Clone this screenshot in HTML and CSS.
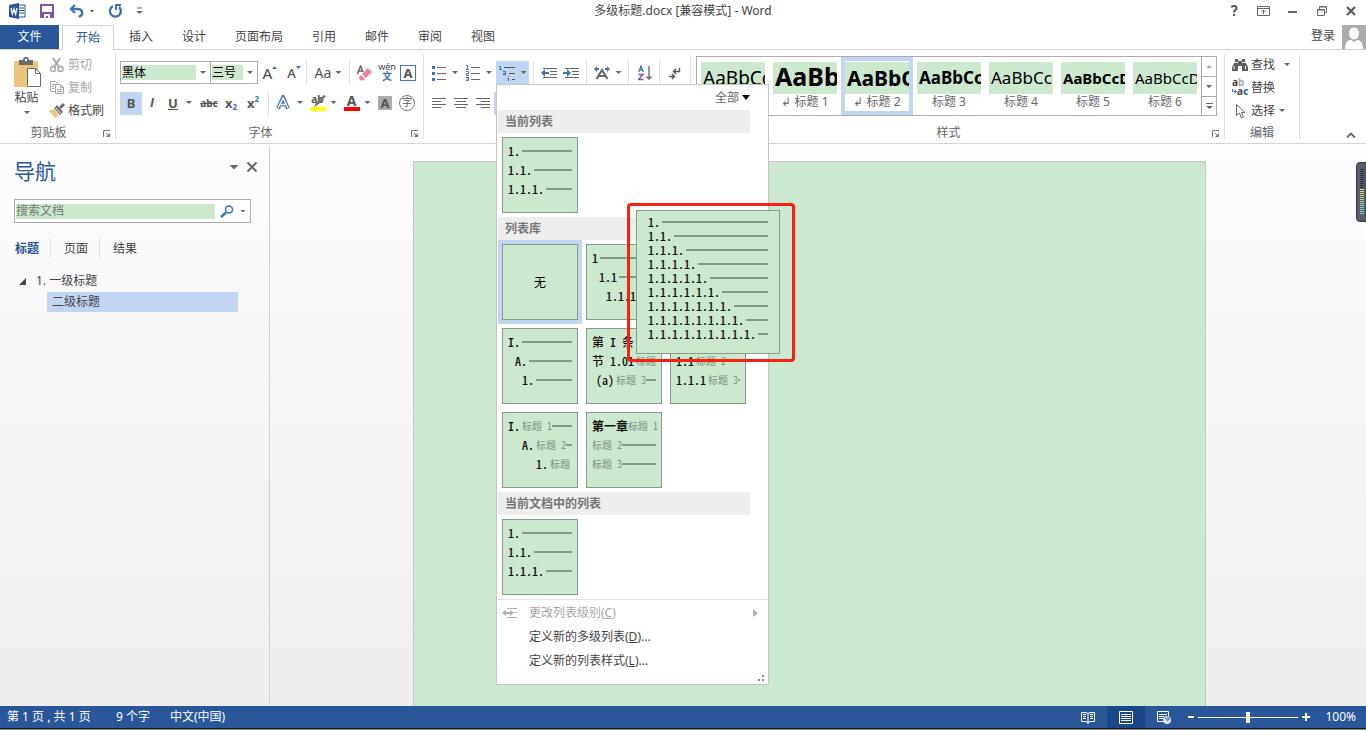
FILE: index.html
```html
<!DOCTYPE html>
<html lang="zh-CN">
<head>
<meta charset="utf-8">
<meta name="viewport" content="width=device-width, initial-scale=1">
<title>多级标题.docx [兼容模式] - Word</title>
<link rel="stylesheet" href="styles.css">
</head>
<body>
<header class="titlebar">
  <div class="quick">
    <svg width="18" height="16" viewBox="0 0 18 16"><path d="M9 2h7v12H9z" fill="#fff" stroke="#2a579a"/><path d="M10 5h5M10 7.500h5M10 10h5" stroke="#2a579a"/><path d="M0 2l10-2v16L0 14z" fill="#2a579a"/><path d="M2 5l1.400 6L5 6l1.600 5L8 5" fill="none" stroke="#fff" stroke-width="1.300"/></svg>
    <button aria-label="保存"><svg width="14" height="14" viewBox="0 0 14 14"><path d="M1 1h12v12H1z" fill="#fff" stroke="#8452ad" stroke-width="2"/><path d="M1 8h12v5H1z" fill="#8452ad"/><path d="M4 10h6v4H8v-2H6v2H4z" fill="#fff"/></svg></button>
    <button class="undo" aria-label="撤消"><svg width="15" height="14" viewBox="0 0 15 14"><path d="M2 5h6.500c6 0 6 7 1 7.500" fill="none" stroke="#3c76b5" stroke-width="2.400"/><path d="M6 1L2 5l4 4" fill="none" stroke="#3c76b5" stroke-width="2.400"/></svg><i class="arr"></i></button>
    <button aria-label="重复"><svg width="14" height="14" viewBox="0 0 14 14"><path d="M5 2.200A5.500 5.500 0 1 0 11 3" fill="none" stroke="#3c76b5" stroke-width="2.400"/><path d="M8 6V1h5" fill="none" stroke="#3c76b5" stroke-width="2"/></svg></button>
    <button class="more" aria-label="自定义"><svg width="7" height="8" viewBox="0 0 7 8"><path d="M1 1h5" stroke="#666"/><path d="M0 4h7L3.500 7z" fill="#666"/></svg></button>
  </div>
  <h1 class="doc-title">多级标题.docx [兼容模式] - Word</h1>
  <div class="window">
    <button aria-label="帮助"><svg width="16" height="14" viewBox="0 0 16 14"><path d="M5.500 3.500C6 1.500 10.500 1.300 10.500 4.200 10.500 6 8 6 8 8.500" fill="none" stroke="#555" stroke-width="2"/><path d="M7 10h2v2H7z" fill="#555"/></svg></button>
    <button aria-label="功能区显示选项"><svg width="14" height="14" viewBox="0 0 14 14"><path d="M.5 2.500h12v9H.5zM.5 4.500h12M6.500 10V6M4.500 8l2-2 2 2" fill="none" stroke="#666"/></svg></button>
    <button aria-label="最小化"><svg width="14" height="14" viewBox="0 0 14 14"><path d="M2 8h9" stroke="#666" stroke-width="2"/></svg></button>
    <button aria-label="还原"><svg width="14" height="14" viewBox="0 0 14 14"><path d="M4.500 5V2.500h7v6H9M2.500 5.500h7v6h-7z" fill="none" stroke="#666"/><path d="M4 3h8M2 6h8" stroke="#666"/></svg></button>
    <button aria-label="关闭"><svg width="14" height="14" viewBox="0 0 14 14"><path d="M3 3l8 8M11 3l-8 8" stroke="#555" stroke-width="2"/></svg></button>
  </div>
</header>

<nav class="tabs">
  <button class="file">文件</button>
  <button class="tab active">开始</button><button class="tab">插入</button><button class="tab">设计</button><button class="tab">页面布局</button><button class="tab">引用</button><button class="tab">邮件</button><button class="tab">审阅</button><button class="tab">视图</button>
  <a class="login" href="#">登录</a>
  <svg width="24" height="24" viewBox="0 0 24 24"><path d="M0 0h24v24H0z" fill="#ababab"/><path d="M12 2.500c7 0 6 12 0 12s-7-12 0-12z" fill="#fff"/><path d="M3 24c0-7 3-9 6-9l3 2 3-2c3 0 6 2 6 9z" fill="#fff"/></svg>
</nav>

<section class="ribbon">
  <div class="group clipboard">
    <div class="body">
      <button class="paste"><svg width="30" height="32" viewBox="0 0 30 32"><path d="M1 4h24v26H1z" fill="#ecc57d"/><path d="M6 3h4c0-4 6-4 6 0h4v5H6z" fill="#6b6b6b"/><path d="M12 2h2v2h-2z" fill="#fff"/><path d="M14.500 11.500h8l5 5v13h-13z" fill="#fff" stroke="#6b6b6b"/><path d="M22.500 11.500v5h5" fill="none" stroke="#6b6b6b"/></svg><span>粘贴</span><i class="arr"></i></button>
      <div class="stack">
        <button class="cmd off"><svg width="16" height="16" viewBox="0 0 16 16"><path d="M4 1l6 9M11 1L5 10" stroke="#a6a6a6" stroke-width="2"/><circle cx="4" cy="12" r="2.500" fill="none" stroke="#a6a6a6" stroke-width="1.400"/><circle cx="11.500" cy="12" r="2.500" fill="none" stroke="#a6a6a6" stroke-width="1.400"/></svg>剪切</button>
        <button class="cmd off"><svg width="16" height="16" viewBox="0 0 16 16"><path d="M1.500 1.500h5l2 2v8h-7zM3 4.500h3M3 6.500h2M3 8.500h2" fill="#fff" stroke="#a6a6a6"/><path d="M6.500 4.500h5l3 3v6h-8zM11.500 4.500v3h3M8 9.500h5M8 11.500h5" fill="#fff" stroke="#a6a6a6"/></svg>复制</button>
        <button class="cmd"><svg width="16" height="16" viewBox="0 0 16 16"><path d="M0 8l5-2 5 6-4 3z" fill="#ecc57d"/><path d="M5 5l3-3 6 7-3 3z" fill="#6b6b6b"/><path d="M10 4l4-4 2 2-4 4z" fill="#6b6b6b"/><path d="M6.500 4.500l5.500 6" stroke="#fff"/></svg>格式刷</button>
      </div>
    </div>
    <div class="caption"><span>剪贴板</span><svg class="launch" width="8" height="8" viewBox="0 0 8 8"><path d="M.5 7V.5H7M3 3l3 3" fill="none" stroke="#777"/><path d="M7 3v4H3z" fill="#777"/></svg></div>
  </div>

  <div class="group font">
    <div class="body rows">
      <div class="row f1">
        <label class="combo"><select aria-label="字体"><option>黑体</option></select><i class="arr"></i></label>
        <label class="combo second"><select aria-label="字号"><option>三号</option></select><i class="arr"></i></label>
        <button class="glyph">A<svg width="5" height="16" viewBox="0 0 5 16"><path d="M0 4h5L2.500 1z" fill="#3c76b5"/></svg></button>
        <button class="glyph small">A<svg width="5" height="16" viewBox="0 0 5 16"><path d="M0 1h5L2.500 4z" fill="#3c76b5"/></svg></button>
        <i class="sep"></i>
        <button class="glyph aa">Aa<i class="arr"></i></button>
        <i class="sep"></i>
        <button class="tool" aria-label="清除格式"><svg width="16" height="16" viewBox="0 0 16 16"><path d="M1.500 9L4.500 1l2.500 6M2.500 6h4" fill="none" stroke="#666" stroke-width="1.500"/><path d="M6 9l6-6 4 4-6 6z" fill="#e8819a"/><path d="M5 10l4 4-2 1.500H5L2.500 13z" fill="#e8819a"/></svg></button>
        <button class="pinyin"><span>wén</span><b>文</b></button>
        <button class="tool"><span class="boxed">A</span></button>
      </div>
      <div class="row f2">
        <button class="glyph on bold">B</button>
        <button class="glyph ital">I</button>
        <button class="glyph bold"><u>U</u><i class="arr"></i></button>
        <button class="glyph strike">abc</button>
        <button class="glyph scr">x<sub>2</sub></button>
        <button class="glyph scr">x<sup>2</sup></button>
        <i class="sep"></i>
        <button class="glyph" aria-label="文本效果"><svg width="16" height="16" viewBox="0 0 16 16"><path d="M3 13.500L8 2.500l5 11M5 9.500h6" fill="none" stroke="#cfe0f2" stroke-width="5"/><path d="M3 13.500L8 2.500l5 11M5 9.500h6" fill="none" stroke="#3c76b5" stroke-width="3.600"/><path d="M3 13L8 3l5 10M5 9.500h6" fill="none" stroke="#fff" stroke-width="1.300"/></svg><i class="arr"></i></button>
        <button class="glyph"><span class="mark"><small>ab</small><svg width="16" height="12" viewBox="0 0 16 12"><path d="M16 1l-7 8-5 3 2-5 8-7z" fill="#777"/></svg></span><i class="arr"></i></button>
        <button class="glyph"><span class="redbar">A</span><i class="arr"></i></button>
        <button class="tool"><span class="shade">A</span></button>
        <button class="tool"><span class="ring">字</span></button>
      </div>
    </div>
    <div class="caption"><span>字体</span><svg class="launch" width="8" height="8" viewBox="0 0 8 8"><path d="M.5 7V.5H7M3 3l3 3" fill="none" stroke="#777"/><path d="M7 3v4H3z" fill="#777"/></svg></div>
  </div>

  <div class="group para">
    <div class="body rows">
      <div class="row p1">
        <button class="glyph" aria-label="项目符号"><svg width="14" height="16" viewBox="0 0 14 16"><path d="M5 2.500h9M5 8.500h9M5 14.500h9" stroke="#666"/><path d="M0 1h3v3H0zM0 7h3v3H0zM0 13h3v3H0z" fill="#3c76b5"/></svg><i class="arr"></i></button>
        <button class="glyph" aria-label="编号"><svg width="14" height="16" viewBox="0 0 14 16"><path d="M5 2.500h9M5 8.500h9M5 14.500h9" stroke="#666"/><path d="M0 .5h1.500V4M0 4.500h3M0 6.500h2.500v2H.5v2H3M0 12.500h2.500v3H0M.5 14h2" fill="none" stroke="#3c76b5"/></svg><i class="arr"></i></button>
        <div class="multi">
          <button class="glyph on" aria-label="多级列表" aria-expanded="true"><svg width="16" height="16" viewBox="0 0 16 16"><path d="M5 2.500h11M10 8.500h6M13 14.500h3" stroke="#555"/><path d="M0 1.500h1.500V4M0 4.500h3M4 6.500h2.500V10H4.500V8.500H6M9.500 11v1M8 13.500h1.500V16" fill="none" stroke="#3c76b5"/></svg><i class="arr"></i></button>
          <div class="menu">
            <button class="all">全部<i class="arr big"></i></button>
            <h3>当前列表</h3>
            <div class="cells"><button class="cell"><span class="tile"><span class="ln"><b>1.</b><i></i></span><span class="ln"><b>1.1.</b><i></i></span><span class="ln"><b>1.1.1.</b><i></i></span></span></button></div>
            <h3>列表库</h3>
            <div class="cells">
              <button class="cell chosen"><span class="tile none">无</span></button>
              <button class="cell"><span class="tile"><span class="ln"><b>1</b><i></i></span><span class="ln in7"><b>1.1</b><i></i></span><span class="ln in14"><b>1.1.1</b><i></i></span></span></button>
              <button class="cell" aria-label="多级编号"><span class="tile"></span></button>
              <button class="cell"><span class="tile"><span class="ln"><b>I.</b><i></i></span><span class="ln in7"><b>A.</b><i></i></span><span class="ln in14"><b>1.</b><i></i></span></span></button>
              <button class="cell"><span class="tile"><span class="ln"><b>第 I 条</b></span><span class="ln"><b>节 1.01</b><em>标题</em></span><span class="ln in4"><b>(a)</b><em>标题 3</em><i></i></span></span></button>
              <button class="cell"><span class="tile"><span class="ln"></span><span class="ln"><b>1.1</b><em>标题 2</em><i></i></span><span class="ln"><b>1.1.1</b><em>标题 3</em><i></i></span></span></button>
              <button class="cell"><span class="tile"><span class="ln"><b>I.</b><em>标题 1</em><i></i></span><span class="ln in14"><b>A.</b><em>标题 2</em><i></i></span><span class="ln in28"><b>1.</b><em>标题</em></span></span></button>
              <button class="cell"><span class="tile"><span class="ln"><b class="wide">第一章</b><em>标题 1</em></span><span class="ln"><em>标题 2</em><i></i></span><span class="ln"><em>标题 3</em><i></i></span></span></button>
            </div>
            <h3>当前文档中的列表</h3>
            <div class="cells"><button class="cell"><span class="tile"><span class="ln"><b>1.</b><i></i></span><span class="ln"><b>1.1.</b><i></i></span><span class="ln"><b>1.1.1.</b><i></i></span></span></button></div>
            <div class="actions">
              <button class="off"><svg width="16" height="12" viewBox="0 0 16 12"><path d="M5 1.500h10M12 5.500h3M5 10.500h10" stroke="#b1b1b1"/><path d="M0 6l4-3v2h4V3l4 3-4 3V7H4v2z" fill="#b1b1b1"/></svg><span>更改列表级别(<u>C</u>)</span><svg width="5" height="8" viewBox="0 0 5 8"><path d="M0 0l5 4-5 4z" fill="#b1b1b1"/></svg></button>
              <button><span>定义新的多级列表(<u>D</u>)...</span></button>
              <button><span>定义新的列表样式(<u>L</u>)...</span></button>
            </div>
            <svg class="grip" width="6" height="6" viewBox="0 0 6 6"><path d="M4 0h2v2H4zM0 4h2v2H0zM4 4h2v2H4z" fill="#888"/></svg>
            <div class="preview">
              <span class="ln"><b>1.</b><i></i></span><span class="ln"><b>1.1.</b><i></i></span><span class="ln"><b>1.1.1.</b><i></i></span><span class="ln"><b>1.1.1.1.</b><i></i></span><span class="ln"><b>1.1.1.1.1.</b><i></i></span><span class="ln"><b>1.1.1.1.1.1.</b><i></i></span><span class="ln"><b>1.1.1.1.1.1.1.</b><i></i></span><span class="ln"><b>1.1.1.1.1.1.1.1.</b><i></i></span><span class="ln"><b>1.1.1.1.1.1.1.1.1.</b><i></i></span>
            </div>
            <div class="callout"></div>
          </div>
        </div>
        <i class="sep"></i>
        <button class="tool" aria-label="减少缩进量"><svg width="16" height="14" viewBox="0 0 16 14"><path d="M2 2.500h14M9 5.500h7M9 8.500h7M2 11.500h14" stroke="#666"/><path d="M0 7l4-4v3h4v2H4v3z" fill="#3c76b5"/></svg></button>
        <button class="tool" aria-label="增加缩进量"><svg width="16" height="14" viewBox="0 0 16 14"><path d="M2 2.500h14M9 5.500h7M9 8.500h7M2 11.500h14" stroke="#666"/><path d="M8 7L4 3v3H0v2h4v3z" fill="#3c76b5"/></svg></button>
        <i class="sep"></i>
        <button class="glyph" aria-label="中文版式"><svg width="16" height="16" viewBox="0 0 16 16"><path d="M2.500 14L8 5l5.500 9M5 11h6" fill="none" stroke="#666" stroke-width="2"/><path d="M0 4l3-3v2h2v2H3v2zM16 4l-3-3v2h-2v2h2v2z" fill="#3c76b5"/></svg><i class="arr"></i></button>
        <i class="sep"></i>
        <button class="tool" aria-label="排序"><svg width="14" height="16" viewBox="0 0 14 16"><path d="M.7 7L3 1l2.300 6M1.500 5h3" fill="none" stroke="#3c76b5" stroke-width="1.300"/><path d="M.5 9.500h4.500l-4.500 5h5" fill="none" stroke="#8452ad" stroke-width="1.400"/><path d="M11 1v13M8.500 11.500L11 14l2.500-2.500" fill="none" stroke="#666" stroke-width="1.300"/></svg></button>
        <i class="sep"></i>
        <button class="tool" aria-label="显示编辑标记"><svg width="12" height="14" viewBox="0 0 12 14"><path d="M10.500 2v3.500H5M7 3L4.500 5.500 7 8M0 10.500h5M3 8l2.500 2.500L3 13" fill="none" stroke="#555" stroke-width="1.400"/></svg></button>
      </div>
      <div class="row p2">
        <button class="tool" aria-label="左对齐"><svg width="14" height="11" viewBox="0 0 14 11"><path d="M0 .5h14M0 3.500h9M0 6.500h14M0 9.500h9" stroke="#666"/></svg></button>
        <button class="tool" aria-label="居中"><svg width="14" height="11" viewBox="0 0 14 11"><path d="M0 .5h14M2 3.500h10M0 6.500h14M2 9.500h10" stroke="#666"/></svg></button>
        <button class="tool" aria-label="右对齐"><svg width="14" height="11" viewBox="0 0 14 11"><path d="M0 .5h14M5 3.500h9M0 6.500h14M5 9.500h9" stroke="#666"/></svg></button>
        <button class="tool on" aria-label="两端对齐"></button>
      </div>
    </div>
  </div>

  <div class="group styles">
    <div class="body">
      <div class="gallery">
        <button class="style" aria-label="正文"><span class="sample s19">AaBbCcDd</span></button>
        <button class="style"><span class="sample s25">AaBbCcDd</span><span>↲ 标题 1</span></button>
        <button class="style picked"><span class="sample s21">AaBbCcDd</span><span>↲ 标题 2</span></button>
        <button class="style"><span class="sample s17 heavy">AaBbCcDd</span><span>标题 3</span></button>
        <button class="style"><span class="sample s17">AaBbCcDd</span><span>标题 4</span></button>
        <button class="style"><span class="sample s15 heavy">AaBbCcDd</span><span>标题 5</span></button>
        <button class="style"><span class="sample s15">AaBbCcDd</span><span>标题 6</span></button>
        <div class="scroller"><button aria-label="上一行"><i class="arr up"></i></button><button aria-label="下一行"><i class="arr"></i></button><button aria-label="其他"><svg width="7" height="8" viewBox="0 0 7 8"><path d="M0 1.500h7" stroke="#666"/><path d="M0 4h7L3.500 7z" fill="#666"/></svg></button></div>
      </div>
    </div>
    <div class="caption"><span>样式</span><svg class="launch" width="8" height="8" viewBox="0 0 8 8"><path d="M.5 7V.5H7M3 3l3 3" fill="none" stroke="#777"/><path d="M7 3v4H3z" fill="#777"/></svg></div>
  </div>

  <div class="group edit">
    <div class="body">
      <div class="stack">
        <button class="cmd find"><svg width="16" height="16" viewBox="0 0 16 16"><path d="M3 2h3v2h4V2h3v3l3 5v4h-6V9H6v5H0v-4l3-5z" fill="#5f5f5f"/><path d="M3 5.500h3M10 5.500h3M2 12V9M13.500 12V9" stroke="#fff"/></svg>查找<i class="arr"></i></button>
        <button class="cmd"><span class="swap"><span>a<i>b</i></span><span class="to"><svg width="5" height="5" viewBox="0 0 5 5"><path d="M.5 0v2.500H4M2.500 .5l2 2-2 2" fill="none" stroke="#3c76b5"/></svg>a<b>c</b></span></span>替换</button>
        <button class="cmd"><svg width="16" height="16" viewBox="0 0 16 16"><path d="M4.500 1.500v11l3-2.500 2 5 2-1-2-4.500h3.500z" fill="#fff" stroke="#666"/></svg>选择<i class="arr"></i></button>
      </div>
    </div>
    <div class="caption"><span>编辑</span></div>
  </div>
  <button class="collapse" aria-label="折叠功能区"><svg width="10" height="7" viewBox="0 0 10 7"><path d="M1 5.500l4-4 4 4" fill="none" stroke="#666" stroke-width="1.800"/></svg></button>
</section>

<main class="work">
  <aside class="nav">
    <div class="nav-head"><h2>导航</h2><i class="arr wide-arr"></i><button aria-label="关闭导航"><svg width="12" height="12" viewBox="0 0 12 12"><path d="M1.500 1.500l9 9M10.500 1.500l-9 9" stroke="#666" stroke-width="2"/></svg></button></div>
    <div class="search"><input type="text" aria-label="搜索文档" placeholder="搜索文档"><button aria-label="搜索"><svg width="14" height="13" viewBox="0 0 14 13"><circle cx="9" cy="4.500" r="3.500" fill="none" stroke="#3c76b5" stroke-width="1.600"/><path d="M6 7.500L1 12" stroke="#3c76b5" stroke-width="2.500"/></svg></button><i class="arr"></i></div>
    <div class="nav-tabs"><button class="sel">标题</button><button>页面</button><button>结果</button></div>
    <ul class="tree">
      <li><svg width="7" height="7" viewBox="0 0 7 7"><path d="M7 0v7H0z" fill="#444"/></svg><span>1. 一级标题</span></li>
      <li class="current">二级标题</li>
    </ul>
  </aside>
  <div class="canvas"><article class="page"></article></div>
  <svg class="meter" width="10" height="60" viewBox="0 0 10 60"><path d="M10 .5H4Q.5 .5 .5 4v52q0 3.500 3.500 3.500h6z" fill="#595e6e" stroke="#343844"/><path d="M4 7.500h4M4 9.500h4M4 11.500h4M4 13.500h4M4 15.500h4M4 17.500h4M4 19.500h4M4 21.500h4M4 23.500h4M4 25.500h4" stroke="#303440"/><path d="M4 27.500h4M4 29.500h4M4 31.500h4M4 33.500h4" stroke="#d8db78"/><path d="M4 35.500h4M4 37.500h4M4 39.500h4M4 41.500h4M4 43.500h4" stroke="#a4d79a"/><path d="M4 45.500h4M4 47.500h4M4 49.500h4M4 51.500h4" stroke="#6fd0c4"/></svg>
</main>

<footer class="status">
  <span class="pages">第 1 页 , 共 1 页</span><span class="words">9 个字</span><span>中文(中国)</span>
  <div class="views">
    <button aria-label="阅读视图"><svg width="14" height="13" viewBox="0 0 14 13"><path d="M.5 1.500H5l2 1 2-1h4.500v9H9l-2 1-2-1H.5zM7 2v11M2 3.500h3M2 5.500h3M2 7.500h3M9 3.500h3M9 5.500h3M9 7.500h3" fill="none" stroke="#fff"/></svg></button>
    <button class="now" aria-label="页面视图"><svg width="14" height="13" viewBox="0 0 14 13"><path d="M.5.5h13v12H.5zM2 3.500h10M2 5.500h10M2 7.500h10M2 9.500h10" fill="none" stroke="#fff"/></svg></button>
    <button aria-label="Web 版式"><svg width="14" height="13" viewBox="0 0 14 13"><path d="M6 10.500H.5V.5h11V5M2 3.500h8M2 5.500h5M2 7.500h4" fill="none" stroke="#fff"/><circle cx="10" cy="9" r="4" fill="#dce6f3"/><path d="M8 7l2 1 1 2M10 6l2 1v2" stroke="#2a579a" fill="none"/></svg></button>
  </div>
  <button class="zoom-out" aria-label="缩小"></button>
  <input class="zoom" type="range" min="0" max="100" value="50" aria-label="缩放">
  <button class="zoom-in" aria-label="放大"></button>
  <span class="percent">100%</span>
</footer>
<div class="edge"></div>
</body>
</html>
```
FILE: styles.css
```css
* { box-sizing: border-box; }
body {
  margin: 0; height: 100vh; display: flex; flex-direction: column; overflow: hidden;
  background: #fff; color: #444;
  font: 12px/16px "Noto Sans", "Noto Sans CJK SC", sans-serif;
}
button, input, select { font: inherit; color: inherit; border: 0; padding: 0; margin: 0; background: none; border-radius: 0; }
svg { display: block; flex: none; }
h1, h2, h3, ul { margin: 0; padding: 0; font-weight: normal; list-style: none; }
.arr { flex: none; width: 6px; height: 3px; background: #666; clip-path: polygon(0 0, 100% 0, 50% 100%); }
.arr.up { transform: scaleY(-1); background: #aaa; }
.arr.big { width: 8px; height: 5px; background: #000; }
.arr.wide-arr { width: 10px; height: 5px; margin-bottom: 8px; }

.titlebar { height: 25px; flex: none; display: grid; grid-template-columns: 1fr auto 1fr; align-items: center; padding-bottom: 3px; }
.quick { display: flex; align-items: center; padding-left: 9px; gap: 13px; }
.quick .undo { display: flex; align-items: center; gap: 5px; margin-left: 2px; }
.quick .more { margin-left: 1px; }
.doc-title { font-size: 12px; line-height: 20px; }
.window { display: flex; justify-content: flex-end; gap: 15px; padding-right: 8px; }

.tabs { height: 25px; flex: none; display: flex; border-bottom: 1px solid #d4d4d4; }
.tabs .file { width: 59px; margin-right: 3px; background: #2a579a; color: #fff; }
.tab { padding: 0 14px; margin-right: 1px; }
.tab.active { padding: 0 13px; border: 1px solid #d4d4d4; border-bottom: 0; margin-bottom: -1px; background: #fff; color: #2a579a; }
.login { margin-left: auto; margin-right: 7px; color: #444; text-decoration: none; line-height: 22px; }

.ribbon { height: 94px; flex: none; display: flex; padding: 4px 0; border-bottom: 1px solid #d4d4d4; position: relative; z-index: 2; }
.group { display: flex; flex-direction: column; border-right: 1px solid #e1e1e1; }
.body { height: 70px; display: flex; }
.caption { display: flex; align-items: center; height: 16px; padding-right: 18px; margin-top: 1px; color: #666; position: relative; }
.caption span { flex: 1; text-align: center; line-height: 20px; padding-top: 4px; }
.launch { margin: 5px -14px 0 6px; }
.clipboard { width: 116px; }
.font { width: 308px; }
.para { width: 267px; }
.styles { width: 534px; }
.edit { width: 75px; }
.edit .caption { padding-right: 0; }

.paste { width: 38px; margin-left: 6px; padding: 3px 0 0 6px; display: flex; flex-direction: column; align-items: center; }
.paste span { margin: 1px 3px 0 0; }
.paste .arr { margin: 5px 2px 0 0; }
.stack { display: flex; flex-direction: column; padding-left: 5px; margin-top: -1px; }
.cmd { height: 23px; display: flex; align-items: center; gap: 3px; white-space: nowrap; }
.off { color: #a6a6a6; }
.cmd .arr { margin-left: 1px; }
.find .arr { margin-left: 6px; }
.edit .stack { padding-left: 7px; }
.swap { width: 16px; font-size: 10px; line-height: 9px; text-align: left; font-weight: bold; padding-bottom: 2px; }
.swap span { display: flex; align-items: center; }
.swap i { color: #aaa; font-style: normal; }
.swap b { color: #3c76b5; }

.rows { flex-direction: column; gap: 8px; padding: 7px 0 0 4px; }
.row { display: grid; height: 23px; flex: none; }
.f1 { grid-template-columns: 91px 47px 24px 24px 1px 42px 1px 28px 18px 24px; }
.f2 { grid-template-columns: 22px 20px 36px 22px 22px 22px 8px 34px 34px 34px 22px 22px; }
.p1 { grid-template-columns: 34px 34px 33px 9px 22px 22px 9px 33px 9px 24px 5px 26px; }
.p2 { grid-template-columns: 22px 22px 22px 22px; }
.sep { width: 1px; background: #e1e1e1; justify-self: center; }
.combo { display: flex; align-items: center; border: 1px solid #ababab; padding: 0 4px 0 1px; gap: 4px; }
.combo.second { border-left: 0; }
.combo select { appearance: none; flex: 1; min-width: 0; height: 15px; line-height: 15px; background: #cce8cf; color: #000; }
.glyph, .tool { display: flex; align-items: center; justify-content: center; gap: 5px; font-size: 15px; line-height: 16px; color: #555; }
.glyph svg + .arr { margin-left: 1px; }
.glyph.small { font-size: 13px; }
.f1 .glyph { gap: 0; font-weight: 500; }
.f1 .aa { gap: 4px; font-size: 14px; font-weight: normal; }
.f2 button { padding-bottom: 2px; }
.on { background: #c2d5f2; }
.glyph.bold { font-weight: bold; font-size: 13px; gap: 8px; }
.glyph.ital { font-style: italic; font-weight: bold; font-size: 13px; font-family: "Liberation Sans", sans-serif; }
.glyph.strike { font-size: 10px; text-decoration: line-through; font-weight: bold; }
.glyph.scr { font-size: 13px; font-weight: bold; gap: 0; }
.scr sub, .scr sup { font-size: 8px; line-height: 8px; color: #3c76b5; }
.scr sub { padding-top: 8px; }
.scr sup { padding-bottom: 8px; }
.pinyin { display: flex; flex-direction: column; align-items: center; font-size: 9px; line-height: 9px; padding-top: 1px; }
.pinyin b { color: #3c76b5; font-size: 10px; line-height: 10px; }
.boxed { width: 16px; height: 16px; line-height: 14px; border: 1px solid #3c76b5; font-weight: bold; font-size: 13px; }
.mark { width: 16px; height: 16px; border-bottom: 4px solid #ff0; display: grid; }
.mark > * { grid-area: 1 / 1; }
.mark small { font-size: 10px; line-height: 8px; font-weight: bold; }
.redbar { width: 16px; height: 17px; line-height: 13px; border-bottom: 4px solid #f00; font-weight: bold; font-size: 14px; }
.shade { width: 14px; height: 14px; line-height: 14px; background: #ababab; font-weight: bold; font-size: 13px; }
.ring { width: 16px; height: 16px; line-height: 13px; border: 1px solid #777; border-radius: 50%; font-size: 10px; }

.gallery { flex: 1; display: flex; margin: 2px 0 0 5px; height: 60px; border: 1px solid #ababab; }
.styles .body { padding-right: 7px; }
.style { flex: none; width: 72px; padding: 5px 4px 0; display: flex; flex-direction: column; color: #666; }
.style > span { width: 100%; }
.picked { box-shadow: inset 0 0 0 4px #c2d5f2; }
.sample { height: 32px; line-height: 32px; background: #cce8cf; color: #000; overflow: hidden; text-align: left; padding-left: 2px; }
.s25 { font-size: 25px; line-height: 28px; font-weight: bold; }
.s21 { font-size: 21px; font-weight: bold; }
.s19 { font-size: 19px; }
.s17 { font-size: 17px; }
.s15 { font-size: 15px; }
.heavy { font-weight: bold; }
.scroller { flex: 1; display: grid; grid-template-rows: 1fr 1fr 1fr; border-left: 1px solid #ababab; }
.scroller button { display: flex; align-items: center; justify-content: center; }
.scroller button + button { border-top: 1px solid #ababab; }
.collapse { margin: auto 10px 0 auto; }

.multi { position: relative; display: grid; }
.menu { position: absolute; left: 0; top: 23px; width: 273px; background: #fff; border: 1px solid #c6c6c6; padding: 0 1px; display: flex; flex-direction: column; }
.all { display: flex; align-items: center; align-self: flex-end; height: 25px; gap: 3px; padding-right: 17px; color: #666; }
.menu h3 { height: 23px; line-height: 24px; margin-right: 17px; padding-left: 7px; background: #eee; font-size: 12px; font-weight: bold; color: #777; }
.cells { display: grid; grid-template-columns: 84px 84px 84px; }
.cell { height: 84px; padding: 4px; }
.chosen { background: #c2d5f2; }
.tile { display: block; height: 76px; padding: 3px 5px; border: 1px solid #889c8a; background: #cce8cf; overflow: hidden; }
.tile.none { padding-top: 30px; text-align: center; color: #000; }
.ln { display: flex; align-items: center; height: 19px; white-space: pre; font-family: "Noto Sans CJK SC", sans-serif; font-feature-settings: "hwid"; }
.ln b { margin-right: 2px; font-weight: 500; color: #111; }
.ln .wide { margin-right: 0; font-weight: bold; }
.ln em { font-size: 10px; font-style: normal; color: #7d917f; }
.ln i { flex: 1; height: 2px; background: #869a88; }
.in4 { padding-left: 4px; }
.in7 { padding-left: 7px; }
.in14 { padding-left: 14px; }
.in28 { padding-left: 28px; }
.actions { border-top: 1px solid #e1e1e1; padding-top: 1px; }
.actions button { display: flex; align-items: center; width: 100%; height: 24px; padding: 0 9px 0 4px; }
.actions button > span { flex: 1; text-align: left; margin-left: 27px; }
.actions .off > span { margin-left: 11px; }
.grip { align-self: flex-end; margin: 2px 3px 3px 0; }
.preview { position: absolute; left: 139px; top: 125px; width: 144px; height: 144px; padding: 4px 11px; background: #cce8cf; border: 1px solid #889c8a; }
.preview .ln { height: 14px; }
.callout { position: absolute; left: 130px; top: 118px; width: 168px; height: 159px; border: 3px solid #f91f12; border-radius: 4px; }

.work { flex: 1; min-height: 0; display: flex; background: linear-gradient(#fdfdfd, #eee); position: relative; }
.nav { width: 270px; margin: 2px 0; border-right: 1px solid #d0d0d0; padding: 9px 18px 0 14px; }
.nav-head { display: flex; align-items: center; height: 32px; margin-right: -7px; }
.nav-head h2 { flex: 1; font-size: 21px; line-height: 32px; color: #2a579a; }
.nav-head button { margin: 0 0 8px 7px; }
.search { margin-top: 12px; height: 24px; display: flex; align-items: center; border: 1px solid #ababab; background: #fff; padding: 0 4px 0 1px; }
.search input { flex: 1; min-width: 0; height: 15px; margin-right: 5px; background: #cce8cf; }
.search input::placeholder { color: #777; }
.search button { margin-right: 6px; }
.nav-tabs { display: flex; margin: 15px 0 12px; }
.nav-tabs button { height: 20px; line-height: 22px; padding: 0 11px 0 13px; }
.nav-tabs button + button { border-left: 1px solid #e1e1e1; }
.nav-tabs .sel { color: #2a579a; font-weight: bold; padding: 0 11px 0 1px; }
.tree li { display: flex; align-items: center; height: 22px; padding-left: 5px; gap: 10px; line-height: 20px; }
.tree .current { height: 20px; width: 191px; margin-left: 33px; background: #c2d5f2; }
.canvas { flex: 1; display: flex; justify-content: center; padding: 17px 17px 0 0; }
.page { width: 793px; background: #cce8cf; border: 1px solid #c6c6c6; border-bottom: 0; }
.meter { position: absolute; right: 0; top: 18px; }

.status { height: 22px; flex: none; display: flex; align-items: center; padding: 0 10px 0 7px; background: #2a579a; color: #fff; }
.status > span { white-space: nowrap; }
.pages { min-width: 109px; }
.words { min-width: 54px; }
.views { margin-left: auto; display: flex; align-self: stretch; }
.views button { width: 38px; display: flex; align-items: center; justify-content: center; }
.views .now { background: #19478a; }
.zoom-out, .zoom-in { width: 8px; height: 8px; background: linear-gradient(#fff, #fff) center / 8px 2px no-repeat; }
.zoom-out { width: 6px; margin-left: 5px; }
.zoom-in { background: linear-gradient(#fff, #fff) center / 8px 2px no-repeat, linear-gradient(#fff, #fff) center / 2px 8px no-repeat; }
.zoom { appearance: none; width: 100px; height: 12px; margin: 0 4px; background: linear-gradient(#fff, #fff) center / 100% 1px no-repeat; }
.zoom::-webkit-slider-thumb { appearance: none; width: 4px; height: 11px; background: #fff; }
.percent { margin-left: 15px; }
.edge { height: 2px; flex: none; background: linear-gradient(#1a1a1a 50%, #8b9089 50%); }
```
